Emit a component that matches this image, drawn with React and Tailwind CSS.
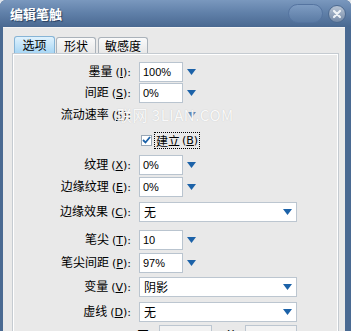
import React from 'react';

const Arrow = () => (
  <svg width="9" height="6" viewBox="0 0 9 6" className="block">
    <path d="M0 0H9L4.5 6Z" fill="#1c62a8" />
  </svg>
);

const Label = ({ label, k }) => (
  <div className="w-[118px] shrink-0 text-right text-[12px] leading-[20px] text-black font-['Noto_Sans_CJK_SC',sans-serif] whitespace-nowrap">
    {label}
    <span className="ml-[3px] text-[11px] font-['DejaVu_Sans',sans-serif]">
      (<span className="underline">{k}</span>):
    </span>
  </div>
);

const Small = ({ value }) => (
  <div className="ml-[8px] flex items-center">
    <div className="w-[44px] h-[20px] border border-[#b9c4cf] bg-white pl-[3px] text-[11px] leading-[18px] font-['Liberation_Sans',sans-serif] text-black">
      {value}
    </div>
    <div className="ml-[4px]">
      <Arrow />
    </div>
  </div>
);

const Wide = ({ value }) => (
  <div className="ml-[8px] w-[158px] h-[20px] border border-[#bcc6d0] bg-white flex items-center justify-between pl-[4px] pr-[4px]">
    <span className="text-[12px] leading-[18px] font-['Noto_Sans_CJK_SC',sans-serif] text-black">{value}</span>
    <Arrow />
  </div>
);

const rows = [
  { label: '墨量', k: 'I', type: 'small', value: '100%', mt: 'mt-[8px]' },
  { label: '间距', k: 'S', type: 'small', value: '0%', mt: 'mt-[1px]' },
  { label: '流动速率', k: 'S', type: 'flow', mt: 'mt-[2px]' },
  { type: 'check', mt: 'mt-[5px]' },
  { label: '纹理', k: 'X', type: 'small', value: '0%', mt: 'mt-[5px]' },
  { label: '边缘纹理', k: 'E', type: 'small', value: '0%', mt: 'mt-[2px]' },
  { label: '边缘效果', k: 'C', type: 'wide', value: '无', mt: 'mt-[5px]' },
  { label: '笔尖', k: 'T', type: 'small', value: '10', mt: 'mt-[8px]' },
  { label: '笔尖间距', k: 'P', type: 'small', value: '97%', mt: 'mt-[3px]' },
  { label: '变量', k: 'V', type: 'wide', value: '阴影', mt: 'mt-[4px]' },
  { label: '虚线', k: 'D', type: 'wide', value: '无', mt: 'mt-[5px]' },
  { type: 'bottom', mt: 'mt-[3px]' },
];

function Row({ r }) {
  if (r.type === 'check') {
    return (
      <div className={`${r.mt} h-[20px] flex items-center`}>
        <div className="w-[118px] shrink-0" />
        <div className="ml-[10px] w-[11px] h-[11px] border border-[#9aa8b6] bg-white flex items-center justify-center">
          <svg width="9" height="8" viewBox="0 0 9 8">
            <path d="M1 4L3.5 6.5L8 1" stroke="#1c62a8" strokeWidth="1.8" fill="none" />
          </svg>
        </div>
        <div className="ml-[2px] h-[17px] px-[1px] border border-dotted border-black flex items-center text-[12px] leading-[15px] font-['Noto_Sans_CJK_SC',sans-serif] text-black whitespace-nowrap">
          建立
          <span className="ml-[2px] text-[11px] font-['DejaVu_Sans',sans-serif]">
            (<span className="underline">B</span>)
          </span>
        </div>
      </div>
    );
  }
  if (r.type === 'bottom') {
    return (
      <div className={`${r.mt} h-[20px] flex items-center`}>
        <div className="w-[124px] shrink-0" />
        <span className="w-[12px] text-[12px] leading-[20px] font-['Noto_Sans_CJK_SC',sans-serif] text-black">开</span>
        <div className="ml-[10px] w-[53px] h-[20px] border border-[#bcc6d0] bg-[#f2f2f2]" />
        <span className="ml-[15px] w-[8px] text-[11px] font-['DejaVu_Sans',sans-serif] text-black">X</span>
        <div className="ml-[10px] w-[52px] h-[20px] border border-[#bcc6d0] bg-[#f2f2f2]" />
      </div>
    );
  }
  return (
    <div className={`${r.mt} h-[20px] flex items-center relative`}>
      <Label label={r.label} k={r.k} />
      {r.type === 'small' && <Small value={r.value} />}
      {r.type === 'wide' && <Wide value={r.value} />}
      {r.type === 'flow' && (
        <>
          <div className="ml-[8px] flex items-center">
            <div className="w-[44px] h-[20px]" />
            <div className="ml-[4px] opacity-70">
              <Arrow />
            </div>
          </div>
          <div className="absolute left-[104px] top-[0px] text-[15px] leading-[20px] text-white/90 font-['Noto_Sans_CJK_SC',sans-serif] whitespace-nowrap tracking-[0.5px] [text-shadow:0_0_1px_#bbb]">
            联网 3LIAN.COM
          </div>
        </>
      )}
    </div>
  );
}

export default function App() {
  return (
    <div className="w-[351px] h-[331px] overflow-hidden bg-[#dfe5ec]">
      <div className="w-[351px] h-[331px] rounded-t-[6px] overflow-hidden bg-[#4a6a92] flex flex-col">
        <div className="h-[27px] shrink-0 bg-gradient-to-b from-[#7a98be] via-[#5f7fa8] to-[#4a6991] flex items-center pl-[10px] pr-[5px]">
          <span className="text-[13px] font-bold text-white font-['Noto_Sans_CJK_SC',sans-serif] [text-shadow:1px_1px_1px_#2a4060] tracking-[0px]">
            编辑笔触
          </span>
          <div className="ml-auto w-[35px] h-[19px] rounded-full bg-gradient-to-b from-[#7e9cc2] to-[#5b7ba4] border border-[#5574a0]" />
          <div className="ml-[5px] w-[18px] h-[18px] rounded-full bg-gradient-to-b from-[#b8c5d5] to-[#7489a6] border border-[#4d6a90] flex items-center justify-center">
            <svg width="10" height="10" viewBox="0 0 10 10">
              <path d="M2 2L8 8M8 2L2 8" stroke="#eef2f6" strokeWidth="2.2" strokeLinecap="round" />
            </svg>
          </div>
        </div>
        <div className="flex-1 ml-[3px] mr-[6px] bg-[#e9e9e9] border-t border-[#f4f4f4] pt-[8px] pl-[9px] pr-[6px] flex flex-col">
          <div className="flex items-end h-[17px] pl-[2px] gap-[1px]">
            <div className="w-[41px] h-[17px] rounded-t-[3px] border border-b-0 border-[#86b4d6] bg-gradient-to-b from-[#e0f2fd] to-[#a8d6f4] flex items-center justify-center text-[12px] font-['Noto_Sans_CJK_SC',sans-serif] text-black">
              选项
            </div>
            <div className="w-[40px] h-[16px] rounded-t-[3px] border border-b-0 border-[#aab2ba] bg-gradient-to-b from-[#fafafa] to-[#e8e8e8] flex items-center justify-center text-[12px] font-['Noto_Sans_CJK_SC',sans-serif] text-black">
              形状
            </div>
            <div className="ml-[1px] w-[50px] h-[16px] rounded-t-[3px] border border-b-0 border-[#aab2ba] bg-gradient-to-b from-[#fafafa] to-[#e8e8e8] flex items-center justify-center text-[12px] font-['Noto_Sans_CJK_SC',sans-serif] text-black">
              敏感度
            </div>
          </div>
          <div className="flex-1 border border-[#c5cbd1] shadow-[inset_1px_1px_0_#ffffff,inset_-1px_0_0_#ffffff] bg-[#e9e9e9] flex flex-col">
            {rows.map((r, i) => (
              <Row key={i} r={r} />
            ))}
          </div>
        </div>
      </div>
    </div>
  );
}
